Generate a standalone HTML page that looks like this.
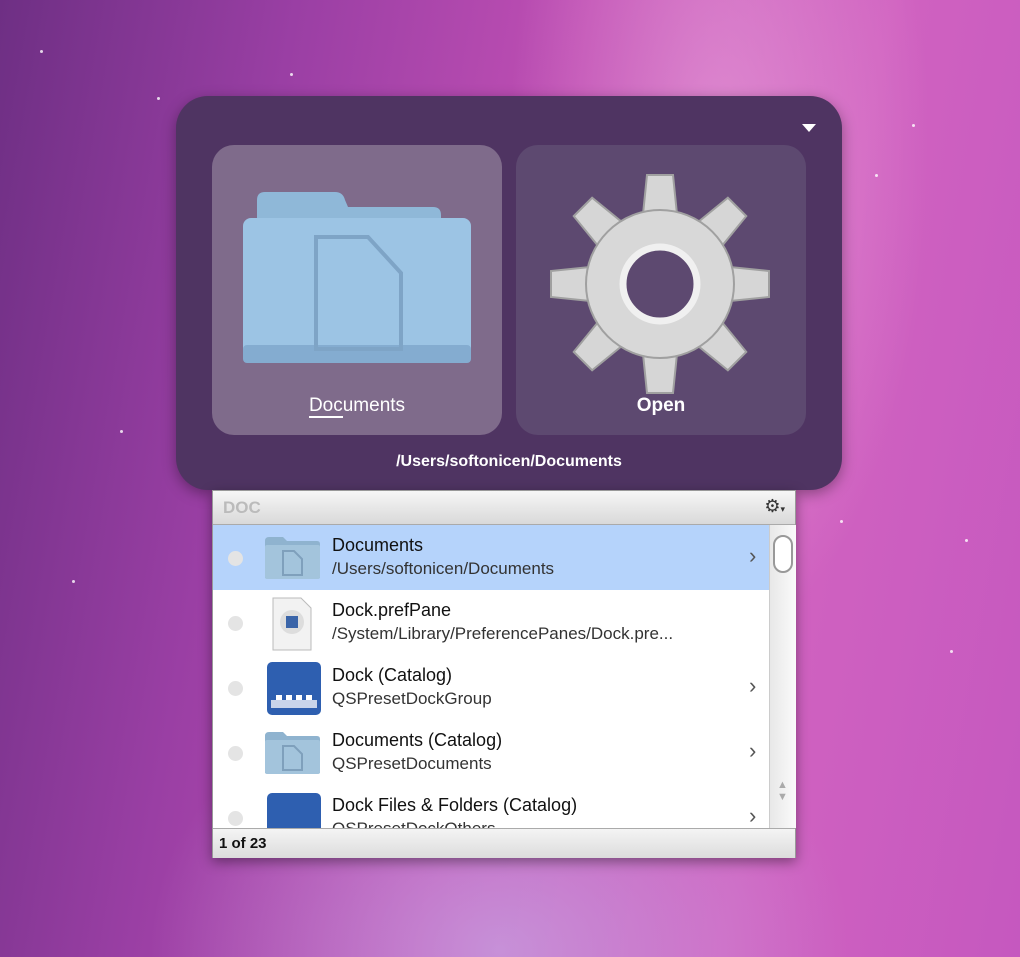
<!DOCTYPE html>
<html><head><meta charset="utf-8"><style>
*{margin:0;padding:0;box-sizing:border-box}
body{width:1020px;height:957px;overflow:hidden;position:relative;font-family:"Liberation Sans","DejaVu Sans",sans-serif;
background:
radial-gradient(ellipse 300px 700px at 720px 150px,rgba(255,210,240,.4),transparent 70%),
radial-gradient(ellipse 500px 400px at 500px 950px,rgba(200,170,230,.7),transparent 70%),
linear-gradient(100deg,#6e2f84 0%,#9a3fa4 25%,#c04fb4 50%,#d062c0 75%,#c558bf 100%);}
.star{position:absolute;width:3px;height:3px;border-radius:50%;background:#fff;opacity:.8}
.panel{position:absolute;left:176px;top:96px;width:666px;height:394px;border-radius:32px;background:#4f3462;box-shadow:0 4px 14px rgba(0,0,0,.35)}
.tile{position:absolute;top:49px;width:290px;height:290px;border-radius:22px}
.lbl{position:absolute;left:0;right:0;top:250px;text-align:center;color:#fff;font-size:19px}
.path{position:absolute;left:0;right:0;top:357px;text-align:center;color:#fff;font-size:16px;font-weight:bold}
.list{position:absolute;left:212px;top:490px;width:584px;height:368px;background:#fff;border:1px solid #999;box-shadow:0 4px 12px rgba(0,0,0,.4)}
.hdr{height:34px;background:linear-gradient(#f6f6f6,#d9d9d9);border-bottom:1px solid #aaa;color:#bbb;font-size:17px;font-weight:bold;padding:7px 10px}
.row{position:absolute;left:0;width:556px;height:65px}
.row .t{position:absolute;left:119px;top:10px;font-size:18px;color:#111}
.row .s{position:absolute;left:119px;top:34px;font-size:17px;color:#333}
.dot{position:absolute;left:15px;top:26px;width:15px;height:15px;border-radius:50%;background:#e4e4e4}
.chev{position:absolute;left:536px;top:18px;font-size:22px;color:#555}
.ftr{position:absolute;left:0;right:0;top:337px;height:30px;background:linear-gradient(#f4f4f4,#dcdcdc);border-top:1px solid #aaa;font-size:15px;font-weight:bold;padding:6px 6px;color:#111}
</style></head><body>
<div class="star" style="left:157px;top:97px"></div><div class="star" style="left:290px;top:73px"></div>
<div class="star" style="left:875px;top:174px"></div><div class="star" style="left:965px;top:539px"></div>
<div class="star" style="left:72px;top:580px"></div><div class="star" style="left:912px;top:124px"></div>
<div class="star" style="left:950px;top:650px"></div><div class="star" style="left:120px;top:430px"></div>
<div class="star" style="left:40px;top:50px"></div><div class="star" style="left:840px;top:520px"></div>
<div class="panel">
 <div style="position:absolute;right:26px;top:28px;width:0;height:0;border-left:7px solid transparent;border-right:7px solid transparent;border-top:8px solid #fff"></div>
 <div class="tile" style="left:36px;background:#7f6b8b">
  <svg width="290" height="250" style="position:absolute;left:0;top:0">
   <path d="M45 55 q0-8 8-8 h70 q8 0 10 8 l3 7 h85 q8 0 8 8 v10 H45z" fill="#8fb8d8"/>
   <rect x="31" y="73" width="228" height="145" rx="8" fill="#9cc4e4"/>
   <rect x="31" y="200" width="228" height="18" rx="4" fill="#84acd0"/>
   <path d="M104 92 h52 l33 36 v76 h-85z" fill="none" stroke="#7ea4c6" stroke-width="4"/>
  </svg>
  <div class="lbl"><span style="border-bottom:2px solid #fff">Doc</span>uments</div>
 </div>
 <div class="tile" style="left:340px;background:#5d4970">
  <svg width="290" height="250" viewBox="0 0 290 250" style="position:absolute;left:0;top:0">
   <g transform="translate(144,139)" fill="#d6d6d6" stroke="#a0a0a0" stroke-width="2">
    <path id="tt" d="M-18 -60 L-13 -109 H13 L18 -60z"/>
    <use href="#tt" transform="rotate(45)"/><use href="#tt" transform="rotate(90)"/>
    <use href="#tt" transform="rotate(135)"/><use href="#tt" transform="rotate(180)"/>
    <use href="#tt" transform="rotate(225)"/><use href="#tt" transform="rotate(270)"/>
    <use href="#tt" transform="rotate(315)"/>
    <circle r="74" fill="#d8d8d8"/>
    <circle r="37" fill="#5d4970" stroke="#f0f0f0" stroke-width="7"/>
   </g>
  </svg>
  <div class="lbl" style="font-weight:bold">Open</div>
 </div>
 <div class="path">/Users/softonicen/Documents</div>
</div>
<div class="list">
 <div class="hdr">DOC<span style="position:absolute;right:10px;top:5px;color:#333;font-size:18px">⚙<span style="font-size:9px">▾</span></span></div>
 <div class="row" style="top:34px;background:#b5d3fb"><div class="dot"></div>
  <svg style="position:absolute;left:50px;top:10px" width="58" height="46"><path d="M2 6 q0-4 4-4 h14 l4 4 h30 q3 0 3 3 v34 H2z" fill="#8fb3cf"/><rect x="2" y="10" width="55" height="34" rx="2" fill="#a3c4dc"/><path d="M20 16 h11 l8 8 v16 h-19z" fill="none" stroke="#7fa0bc" stroke-width="2"/></svg>
  <div class="t">Documents</div><div class="s">/Users/softonicen/Documents</div><div class="chev">›</div></div>
 <div class="row" style="top:99px"><div class="dot"></div>
  <svg style="position:absolute;left:57px;top:6px" width="44" height="56"><path d="M3 2 h28 l10 10 v42 h-38z" fill="#f2f2f2" stroke="#bbb"/><circle cx="22" cy="26" r="12" fill="#ddd"/><rect x="16" y="20" width="12" height="12" fill="#3a64a8"/></svg>
  <div class="t">Dock.prefPane</div><div class="s">/System/Library/PreferencePanes/Dock.pre...</div></div>
 <div class="row" style="top:164px"><div class="dot"></div>
  <svg style="position:absolute;left:54px;top:7px" width="54" height="54"><rect width="54" height="53" rx="5" fill="#2e5fb0"/><rect x="4" y="38" width="46" height="8" fill="#c8d4ea"/><g fill="#fff"><rect x="9" y="33" width="6" height="5"/><rect x="19" y="33" width="6" height="5"/><rect x="29" y="33" width="6" height="5"/><rect x="39" y="33" width="6" height="5"/></g></svg>
  <div class="t">Dock (Catalog)</div><div class="s">QSPresetDockGroup</div><div class="chev">›</div></div>
 <div class="row" style="top:229px"><div class="dot"></div>
  <svg style="position:absolute;left:50px;top:10px" width="58" height="46"><path d="M2 6 q0-4 4-4 h14 l4 4 h30 q3 0 3 3 v34 H2z" fill="#8fb3cf"/><rect x="2" y="10" width="55" height="34" rx="2" fill="#a3c4dc"/><path d="M20 16 h11 l8 8 v16 h-19z" fill="none" stroke="#7fa0bc" stroke-width="2"/></svg>
  <div class="t">Documents (Catalog)</div><div class="s">QSPresetDocuments</div><div class="chev">›</div></div>
 <div class="row" style="top:294px;height:43px;overflow:hidden"><div class="dot"></div>
  <div style="position:absolute;left:54px;top:8px;width:54px;height:40px;border-radius:5px;background:#2e5fb0"></div>
  <div class="t">Dock Files &amp; Folders (Catalog)</div><div class="s">QSPresetDockOthers</div><div class="chev">›</div></div>
 <div style="position:absolute;left:556px;top:34px;width:27px;height:303px;background:linear-gradient(90deg,#e8e8e8,#fafafa);border-left:1px solid #ccc">
  <div style="position:absolute;left:3px;top:10px;width:20px;height:38px;border-radius:10px;background:#fff;border:2px solid #999"></div>
  <div style="position:absolute;left:7px;top:254px;color:#aaa;font-size:11px">▲<br>▼</div>
 </div>
 <div class="ftr">1 of 23</div>
</div>
</body></html>
